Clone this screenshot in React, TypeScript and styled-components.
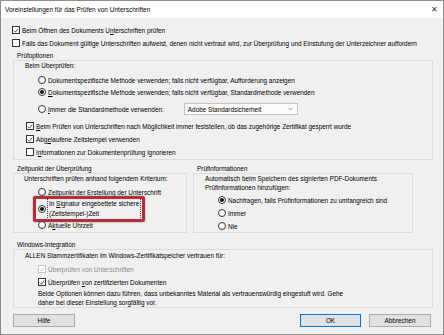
import React from "react";
import styled, { createGlobalStyle } from "styled-components";

const Global = createGlobalStyle`
  html, body { margin: 0; padding: 0; background: #ffffff; }
  body { font-family: "Liberation Sans", Arial, sans-serif; font-size: 6.4px; color: #000; }
  * { box-sizing: border-box; }
`;

const Window = styled.div`
  width: 444px;
  height: 335px;
  border: 1px solid #8e8e8e;
  background: #f0f0f0;
  display: flex;
  flex-direction: column;
  overflow: hidden;
`;

const TitleBar = styled.div`
  height: 17px;
  flex: none;
  background: #ffffff;
  display: flex;
  align-items: center;
  justify-content: space-between;
  padding: 0 5px 0 4px;
  font-size: 6.5px;
  color: #000;
`;

const Close = styled.span`
  font-size: 8px;
  color: #333;
  line-height: 1;
`;

const Body = styled.div`
  flex: 1;
  display: flex;
  flex-direction: column;
  padding: 0 10px 0 11px;
`;

const Row = styled.div<{ $mt?: number; $indent?: number; $h?: number }>`
  display: flex;
  align-items: center;
  height: ${(p) => p.$h ?? 12}px;
  margin-top: ${(p) => p.$mt ?? 0}px;
  padding-left: ${(p) => p.$indent ?? 0}px;
  white-space: nowrap;
  position: relative;
`;

const Line = styled.div<{ $mt?: number; $indent?: number; $muted?: boolean }>`
  line-height: 9px;
  margin-top: ${(p) => p.$mt ?? 0}px;
  padding-left: ${(p) => p.$indent ?? 0}px;
  white-space: nowrap;
  color: ${(p) => (p.$muted ? "#8d8d8d" : "#000")};
`;

const GroupLabel = styled.div<{ $mt?: number }>`
  height: 8px;
  line-height: 8px;
  margin-top: ${(p) => p.$mt ?? 0}px;
  padding-left: 5px;
  white-space: nowrap;
`;

const Box = styled.div<{ $pb?: number; $grow?: boolean }>`
  border: 1px solid #dcdcdc;
  margin-left: 1px;
  padding-bottom: ${(p) => p.$pb ?? 0}px;
  display: flex;
  flex-direction: column;
  flex: ${(p) => (p.$grow ? "1" : "none")};
`;

const Group = styled.div<{ $w?: number }>`
  display: flex;
  flex-direction: column;
  width: ${(p) => (p.$w ? `${p.$w}px` : "auto")};
`;

const TwoCols = styled.div`
  display: flex;
  gap: 5px;
  align-items: stretch;
`;

const CheckBoxEl = styled.span<{ $disabled?: boolean }>`
  width: 8px;
  height: 8px;
  flex: none;
  border: 1px solid ${(p) => (p.$disabled ? "#c4c4c4" : "#333")};
  background: #fff;
  margin-right: 2px;
  display: flex;
  align-items: center;
  justify-content: center;
`;

const RadioEl = styled.span<{ $checked?: boolean }>`
  width: 8px;
  height: 8px;
  flex: none;
  border: 1px solid #333;
  border-radius: 50%;
  background: #fff;
  margin-right: 2px;
  display: flex;
  align-items: center;
  justify-content: center;
  &::after {
    content: "";
    width: 4px;
    height: 4px;
    border-radius: 50%;
    background: #111;
    display: ${(p) => (p.$checked ? "block" : "none")};
  }
`;

const Text = styled.span<{ $muted?: boolean }>`
  color: ${(p) => (p.$muted ? "#8d8d8d" : "#000")};
`;

const Select = styled.div`
  margin-left: 20px;
  width: 114px;
  height: 12px;
  border: 1px solid #c4c4c4;
  background: #fbfbfb;
  display: flex;
  align-items: center;
  justify-content: space-between;
  padding: 0 4px 0 3px;
`;

const FocusText = styled.div`
  outline: 1px dotted #444;
  outline-offset: 0px;
  line-height: 10px;
  padding: 0 1px;
  white-space: nowrap;
`;

const Highlight = styled.div`
  position: absolute;
  left: 19px;
  top: -3px;
  width: 112px;
  height: 26px;
  border: 3px solid #b32f3c;
  border-radius: 2px;
  box-shadow: 0 0 2px rgba(0, 0, 0, 0.45), inset 0 0 1px rgba(0, 0, 0, 0.3);
  pointer-events: none;
`;

const Buttons = styled.div`
  display: flex;
  margin-top: 6px;
  margin-left: 1px;
  margin-right: 2px;
  gap: 8px;
`;

const Button = styled.div<{ $default?: boolean; $push?: boolean; $w?: number }>`
  width: ${(p) => p.$w ?? 62}px;
  height: 13px;
  background: #e1e1e1;
  border: 1px solid ${(p) => (p.$default ? "#0078d7" : "#adadad")};
  display: flex;
  align-items: center;
  justify-content: center;
  margin-left: ${(p) => (p.$push ? "auto" : "0")};
`;

const Check = ({ disabled }: { disabled?: boolean }) => (
  <svg width="7" height="7" viewBox="0 0 7 7">
    <polyline
      points="1,3.6 2.8,5.4 6,1.4"
      fill="none"
      stroke={disabled ? "#c4c4c4" : "#222"}
      strokeWidth="0.9"
    />
  </svg>
);

const CheckBox = ({ checked, disabled }: { checked?: boolean; disabled?: boolean }) => (
  <CheckBoxEl $disabled={disabled}>{checked ? <Check disabled={disabled} /> : null}</CheckBoxEl>
);

const Chevron = () => (
  <svg width="5" height="4" viewBox="0 0 5 4">
    <polyline points="0.5,1 2.5,3 4.5,1" fill="none" stroke="#777" strokeWidth="0.7" />
  </svg>
);

export default function App() {
  return (
    <>
      <Global />
      <Window>
        <TitleBar>
          <span>Voreinstellungen für das Prüfen von Unterschriften</span>
          <Close>✕</Close>
        </TitleBar>
        <Body>
          <Row $mt={6}>
            <CheckBox checked />
            <Text>Beim Öffnen des Dokuments U<u>n</u>terschriften prüfen</Text>
          </Row>
          <Row $mt={1}>
            <CheckBox />
            <Text>
              Falls das Dokument gültige Unterschriften aufweist, denen nicht vertraut wird, zur Überprüfung und
              Einstufung der Unterzeichner auffordern
            </Text>
          </Row>

          <GroupLabel $mt={3}>Prüfoptionen</GroupLabel>
          <Box $pb={1}>
            <Line $indent={11}>Beim Überprüfen:</Line>
            <Row $mt={4} $indent={24}>
              <RadioEl />
              <Text>Dokumentspezifische Methode verwenden; falls nicht verfügbar, Aufforderung anzeigen</Text>
            </Row>
            <Row $indent={24}>
              <RadioEl $checked />
              <Text>
                <u>D</u>okumentspezifische Methode verwenden; falls nicht verfügbar, Standardmethode verwenden
              </Text>
            </Row>
            <Row $mt={5} $indent={24}>
              <RadioEl />
              <Text>
                <u>I</u>mmer die Standardmethode verwenden:
              </Text>
              <Select>
                <span>Adobe Standardsicherheit</span>
                <Chevron />
              </Select>
            </Row>
            <Row $mt={5} $indent={12}>
              <CheckBox checked />
              <Text>
                <u>B</u>eim Prüfen von Unterschriften nach Möglichkeit immer feststellen, ob das zugehörige
                Zertifikat gesperrt wurde
              </Text>
            </Row>
            <Row $mt={1} $indent={12}>
              <CheckBox checked />
              <Text>
                Abg<u>e</u>laufene Zeitstempel verwenden
              </Text>
            </Row>
            <Row $mt={1} $indent={12}>
              <CheckBox />
              <Text>
                I<u>n</u>formationen zur Dokumentenprüfung ignorieren
              </Text>
            </Row>
          </Box>

          <TwoCols>
            <Group $w={175}>
              <GroupLabel $mt={5}>Zeitpunkt der Überprüfung</GroupLabel>
              <Box $pb={1} $grow>
                <Line $indent={10}>Unterschriften prüfen anhand folgendem Kriterium:</Line>
                <Row $mt={3} $indent={24}>
                  <RadioEl />
                  <Text>
                    <u>Z</u>eitpunkt der Erstellung der Unterschrift
                  </Text>
                </Row>
                <Row $mt={1} $indent={24} $h={20}>
                  <RadioEl $checked />
                  <FocusText>
                    In <u>S</u>ignatur eingebettete sichere
                    <br />
                    (Zeitstempel-)Zeit
                  </FocusText>
                  <Highlight />
                </Row>
                <Row $indent={24}>
                  <RadioEl />
                  <Text>
                    A<u>k</u>tuelle Uhrzeit
                  </Text>
                </Row>
              </Box>
            </Group>
            <Group $w={221}>
              <GroupLabel $mt={5}>Prüfinformationen</GroupLabel>
              <Box $grow>
                <Line $indent={11}>
                  Automatisch beim Speichern des signierten PDF-Dokuments
                  <br />
                  Prüfinformationen hinzufügen:
                </Line>
                <Row $mt={2} $indent={24}>
                  <RadioEl $checked />
                  <Text>Nachfragen, falls Prüfinformationen zu umfangreich sind</Text>
                </Row>
                <Row $mt={1} $indent={24}>
                  <RadioEl />
                  <Text>Immer</Text>
                </Row>
                <Row $mt={1} $indent={24}>
                  <RadioEl />
                  <Text>Nie</Text>
                </Row>
              </Box>
            </Group>
          </TwoCols>

          <GroupLabel $mt={8}>Windows-Integration</GroupLabel>
          <Box>
            <Line $mt={1} $indent={11}>
              ALLEN Stammzertifikaten im Windows-Zertifikatspeicher vertrauen für:
            </Line>
            <Row $mt={3} $indent={24}>
              <CheckBox checked disabled />
              <Text $muted>Überprüfen von Unterschriften</Text>
            </Row>
            <Row $mt={1} $indent={24}>
              <CheckBox checked />
              <Text>
                Überprüfen <u>v</u>on zertifizierten Dokumenten
              </Text>
            </Row>
            <Line $mt={1} $indent={24}>
              Beide Optionen können dazu führen, dass unbekanntes Material als vertrauenswürdig eingestuft wird. Gehe
              <br />
              daher bei dieser Einstellung sorgfältig vor.
            </Line>
          </Box>

          <Buttons>
            <Button>Hilfe</Button>
            <Button $default $push $w={61}>
              OK
            </Button>
            <Button>Abbrechen</Button>
          </Buttons>
        </Body>
      </Window>
    </>
  );
}
